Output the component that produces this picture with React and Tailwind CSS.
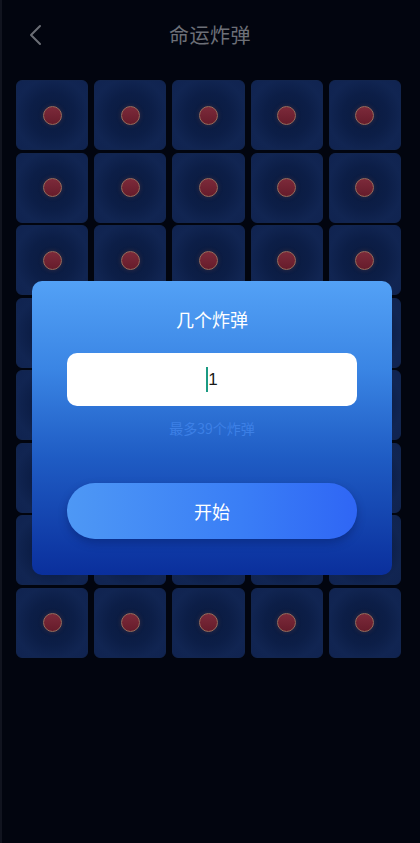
const tiles = Array.from({ length: 40 }, (_, i) => i)

function Tile() {
    return (
        <div className="h-[70px] rounded-[6px] border border-[#12254e] bg-[radial-gradient(circle_at_50%_50%,#0a1a3e_0%,#0c1e47_45%,#112552_75%,#102350_100%)] flex items-center justify-center">
            <div className="w-[19px] h-[19px] rounded-full border border-[#9a6c5a] bg-[linear-gradient(180deg,#7c2a3a,#661c2b)] shadow-[0_0_5px_rgba(150,80,70,0.3)]" />
        </div>
    )
}

export default function App() {
    return (
        <div
            className="relative min-h-[843px] w-[420px] bg-[#02050f] overflow-hidden"
            style={{ fontFamily: '"Noto Sans CJK SC", "Noto Sans", sans-serif' }}
        >
            <div className="absolute left-0 top-0 bottom-0 w-[2px] bg-[#11141f]" />

            {/* header */}
            <div className="relative h-[70px] flex items-center justify-center">
                <svg className="absolute left-[28px] top-[24px]" width="16" height="22" viewBox="0 0 16 22" fill="none">
                    <path d="M12 2 L3 11 L12 20" stroke="#6b6e75" strokeWidth="2" strokeLinecap="round" strokeLinejoin="round" />
                </svg>
                <span className="text-[20px] text-[#6d7078] tracking-[0.5px]">命运炸弹</span>
            </div>

            {/* grid */}
            <div className="pl-4 pr-[19px] pt-[10px] grid grid-cols-5 gap-x-[6px] gap-y-[2.5px]">
                {tiles.map((i) => (
                    <Tile key={i} />
                ))}
            </div>

            {/* modal */}
            <div className="absolute inset-0 flex justify-start pl-[32px] pt-[281px]">
                <div className="w-[360px] h-[294px] rounded-[10px] bg-[linear-gradient(180deg,#53a1f6_0%,#3a85e4_30%,#1f5cc4_60%,#0a2f9c_100%)] flex flex-col items-center pt-[25px] px-[35px]">
                    <div className="text-[18px] leading-[26px] text-white">几个炸弹</div>
                    <div className="mt-[21px] w-[290px] h-[53px] rounded-[10px] bg-white flex items-center justify-center">
                        <div className="w-[2px] h-[25px] bg-[#1b9a82]" />
                        <span className="text-[17px] text-[#1a1a1a] leading-none" style={{ fontFamily: '"Liberation Sans", sans-serif' }}>1</span>
                    </div>
                    <div className="mt-[12px] text-[14px] leading-[20px] text-[#3d80e6]">最多39个炸弹</div>
                    <button className="mt-[45px] w-[290px] h-[56px] rounded-full bg-[linear-gradient(90deg,#4e98f5,#3a7ef6_60%,#2f66f5)] shadow-[0_4px_8px_rgba(0,20,80,0.35)] text-white text-[18px]">
                        开始
                    </button>
                </div>
            </div>
        </div>
    )
}
